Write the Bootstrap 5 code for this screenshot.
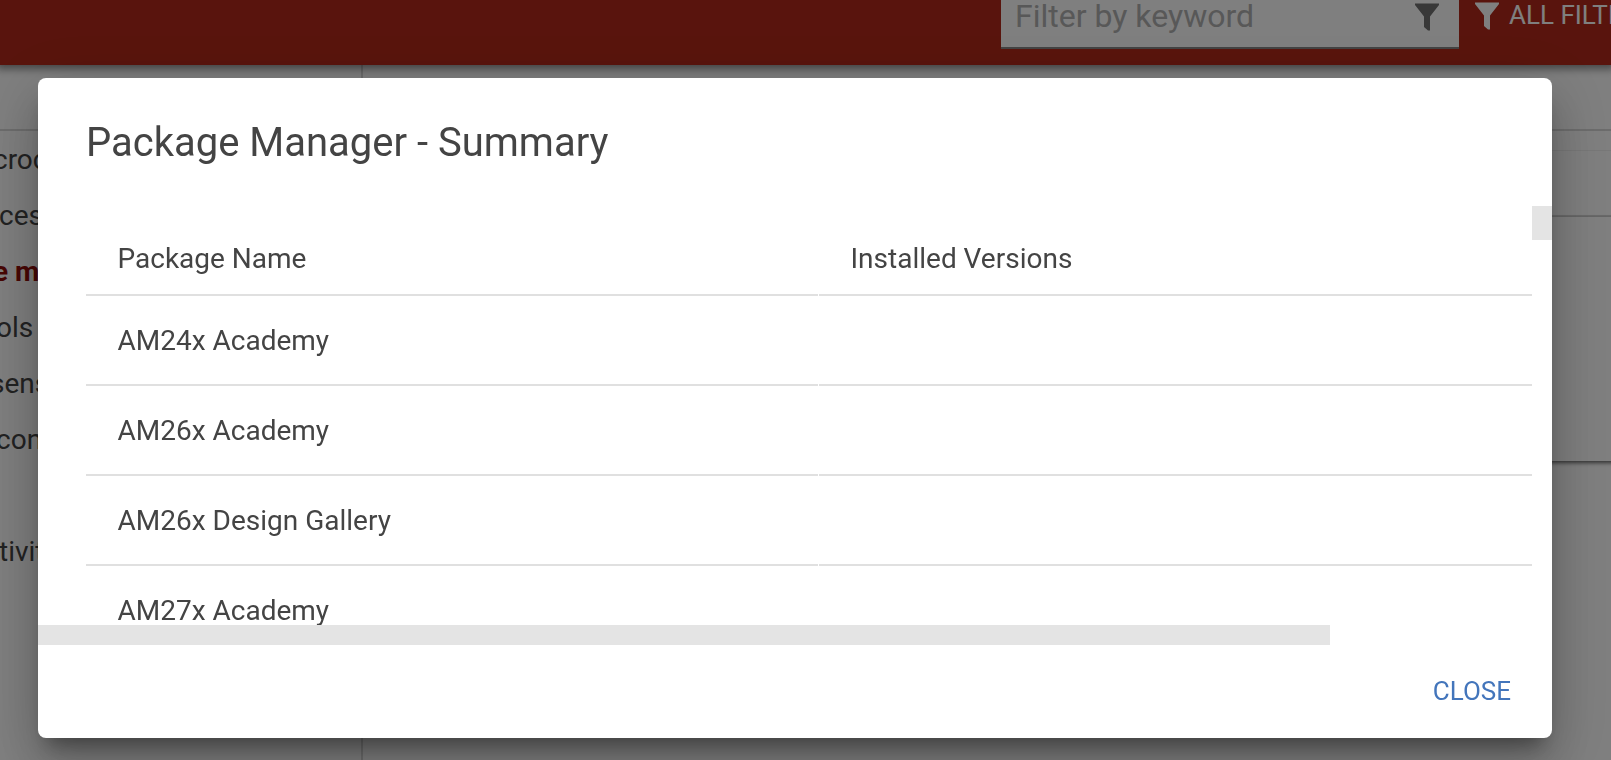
<!DOCTYPE html>
<html lang="en">
<head>
  <meta charset="UTF-8">
  <meta name="viewport" content="width=device-width, initial-scale=1.0">
  <title>Package Manager</title>
  <link href="https://cdn.jsdelivr.net/npm/bootstrap@5.3.2/dist/css/bootstrap.min.css" rel="stylesheet">
  <style>
    body {
      font-family: Roboto, sans-serif;
      font-size: 28px;
      line-height: 40px;
      color: #444;
      height: 760px;
      overflow: hidden;
      background: #fff;
    }

    /* page behind the dialog */
    .top-bar {
      height: 65px;
      padding-left: 1001px;
      background: #b3291a;
      box-shadow: 0 0 8px 4px rgba(0, 0, 0, .45);
      z-index: 2;
    }
    .filter-box {
      width: 458px;
      height: 49px;
      padding: 0 20px 15px 14px;
      border-bottom: 2px solid #888;
      background: #fff;
      font-size: 32px;
      line-height: 32px;
      color: #b0b0b0;
    }
    .all-filters {
      margin-left: 16px;
      font-size: 26px;
      line-height: 30px;
      color: #fff;
    }
    .all-filters svg {
      margin-right: 10px;
    }
    .side-menu {
      width: 363px;
      border-right: 2px solid #d9d9d9;
    }
    .menu-head {
      height: 66px;
      border-bottom: 2px solid #d9d9d9;
    }
    .menu-list {
      padding-top: 1px;
    }
    .menu-list li {
      height: 56px;
      line-height: 56px;
    }
    .menu-list .selected {
      font-weight: 700;
      color: #900c08;
    }
    .toolbar-line {
      height: 20px;
      border-bottom: 1px solid #f0f0f0;
    }
    .crumb-line {
      height: 66px;
      border-bottom: 2px solid #d9d9d9;
    }
    .result-card {
      height: 244px;
      margin-right: -12px;
      box-shadow: 0 2px 4px rgba(0, 0, 0, .6);
    }

    /* dialog */
    .modal-backdrop {
      --bs-backdrop-opacity: .5;
    }
    .modal-dialog {
      width: 1514px;
      max-width: none;
      margin: 78px 0 0 38px;
    }
    .modal-content {
      height: 660px;
      border: 0;
      border-radius: 8px;
      color: #444;
      box-shadow: 0 32px 48px 4px rgba(0, 0, 0, .14), 0 12px 60px 10px rgba(0, 0, 0, .12), 0 16px 20px -10px rgba(0, 0, 0, .4);
    }
    .modal-header {
      height: 128px;
      padding: 2px 48px 0;
      border: 0;
    }
    .modal-title {
      font-size: 40px;
      font-weight: 400;
      line-height: 56px;
    }
    .package-grid {
      height: 419px;
      padding-left: 48px;
    }
    .package-row {
      height: 90px;
      flex: none;
      gap: 1px;
    }
    .package-row > div {
      width: 732px;
      padding-left: 31.5px;
      border-bottom: 2px solid #e0e0e0;
      line-height: 89px;
    }
    .package-row > div:last-child {
      width: 713px;
    }
    .package-row.heading > div {
      padding-top: 9px;
      line-height: 88px;
    }
    .v-track {
      width: 20px;
    }
    .v-thumb {
      height: 34px;
      background: #e4e4e4;
    }
    .h-thumb {
      width: 1292px;
      height: 20px;
      background: #e4e4e4;
    }
    .modal-footer {
      height: 93px;
      padding: 0 41px 2px 0;
      border: 0;
    }
    .btn-close-dialog {
      padding: 0;
      border: 0;
      font-size: 26px;
      line-height: 40px;
      color: #4375bb;
    }
  </style>
</head>
<body>
  <div class="d-flex flex-column h-100">
    <header class="top-bar d-flex align-items-start position-relative flex-shrink-0">
      <div class="filter-box d-flex justify-content-between flex-shrink-0">
        <span>Filter by keyword</span>
        <svg width="24" height="31" viewBox="0 0 24 31" fill="#707070"><path d="M0 3.500H24V5L15 16.500V30.500H13L9 27V16.500L0 5Z"/></svg>
      </div>
      <div class="all-filters d-flex text-nowrap">
        <svg width="24" height="31" viewBox="0 0 24 31" fill="#fff"><path d="M0 2.500H24V4L15 15.500V29.500H13L9 26V15.500L0 4Z"/></svg>
        <span>ALL FILTERS</span>
      </div>
    </header>
    <div class="d-flex flex-grow-1">
      <nav class="side-menu flex-shrink-0">
        <div class="menu-head"></div>
        <ul class="menu-list list-unstyled mb-0">
          <li style="text-indent: -7px">croc</li>
          <li style="text-indent: -1px">ces</li>
          <li class="selected" style="text-indent: -7px">e m</li>
          <li style="text-indent: -4px">ols</li>
          <li style="text-indent: -10px">sens</li>
          <li style="text-indent: -4px">con</li>
          <li>&nbsp;</li>
          <li style="text-indent: -1px">tivit</li>
        </ul>
      </nav>
      <main class="flex-grow-1">
        <div class="menu-head"></div>
        <div class="toolbar-line"></div>
        <div class="crumb-line"></div>
        <div class="result-card"></div>
      </main>
    </div>
  </div>

  <div class="modal-backdrop show"></div>
  <div class="modal d-block overflow-hidden" tabindex="-1" role="dialog" aria-labelledby="dialogTitle">
    <div class="modal-dialog">
      <div class="modal-content">
        <div class="modal-header">
          <h2 class="modal-title" id="dialogTitle">Package Manager - Summary</h2>
        </div>
        <div class="modal-body p-0 d-flex flex-column flex-grow-0">
          <div class="d-flex">
            <div class="package-grid d-flex flex-column flex-grow-1 overflow-hidden">
              <div class="package-row heading d-flex"><div>Package Name</div><div>Installed Versions</div></div>
              <div class="package-row d-flex"><div>AM24x Academy</div><div></div></div>
              <div class="package-row d-flex"><div>AM26x Academy</div><div></div></div>
              <div class="package-row d-flex"><div>AM26x Design Gallery</div><div></div></div>
              <div class="package-row d-flex"><div>AM27x Academy</div><div></div></div>
            </div>
            <div class="v-track"><div class="v-thumb"></div></div>
          </div>
          <div class="h-thumb"></div>
        </div>
        <div class="modal-footer">
          <button type="button" class="btn btn-close-dialog m-0">CLOSE</button>
        </div>
      </div>
    </div>
  </div>
  <script src="https://cdn.jsdelivr.net/npm/bootstrap@5.3.2/dist/js/bootstrap.bundle.min.js"></script>
</body>
</html>
